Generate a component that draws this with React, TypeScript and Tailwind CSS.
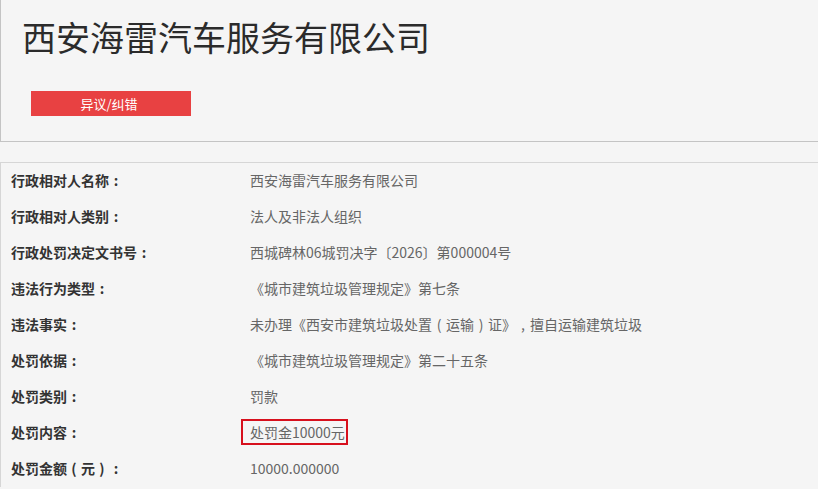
const rows = [
  { label: "行政相对人名称：", value: "西安海雷汽车服务有限公司" },
  { label: "行政相对人类别：", value: "法人及非法人组织" },
  { label: "行政处罚决定文书号：", value: "西城碑林06城罚决字〔2026〕第000004号" },
  { label: "违法行为类型：", value: "《城市建筑垃圾管理规定》第七条" },
  { label: "违法事实：", value: "未办理《西安市建筑垃圾处置（运输）证》，擅自运输建筑垃圾" },
  { label: "处罚依据：", value: "《城市建筑垃圾管理规定》第二十五条" },
  { label: "处罚类别：", value: "罚款" },
  { label: "处罚内容：", value: "处罚金10000元", boxed: true },
  { label: "处罚金额（元）：", value: "10000.000000" },
];

const font = { fontFamily: '"Microsoft YaHei", "Noto Sans CJK SC", "Liberation Sans", sans-serif' };

const Punct = ({ text }: { text: string }) => {
  const parts = text.split(/([（）：，])/);
  return (
    <>
      {parts.map((p, i) => {
        if (p === "（" || p === "）" || p === "：" || p === "，") {
          const ch = p === "（" ? "(" : p === "）" ? ")" : p === "：" ? ":" : ",";
          return (
            <span key={i} className="inline-block w-[1em] text-center">
              {ch}
            </span>
          );
        }
        return <span key={i}>{p}</span>;
      })}
    </>
  );
};

export default function App() {
  return (
    <div className="w-[818px] h-[489px] overflow-hidden bg-[#f5f5f5]" style={font}>
      <div className="h-[142px] border-l border-b border-[#c4c4c4] pl-[21px] pt-[14px]">
        <h1 className="text-[34px] leading-[46px] text-[#2b2b2b] font-normal">
          西安海雷汽车服务有限公司
        </h1>
        <button className="mt-[31px] ml-[9px] w-[160px] h-[25px] bg-[#e84142] text-white text-[13px] leading-[25px] flex justify-center pr-[4px]">
          异议/纠错
        </button>
      </div>
      <div className="mt-[20px] border-l border-t border-[#d6d6d6]">
        {rows.map((r) => (
          <div key={r.label} className="flex h-[36px] items-center text-[14px] pb-[2px]">
            <div className="w-[249px] pl-[10px] font-bold text-[#333]">
              <Punct text={r.label} />
            </div>
            <div className="text-[#666]">
              {r.boxed ? (
                <span className="inline-block -ml-[9px] border-2 border-[#d7101d] pl-[7px] pr-[1px] leading-[22px]">
                  {r.value}
                </span>
              ) : (
                <Punct text={r.value} />
              )}
            </div>
          </div>
        ))}
      </div>
    </div>
  );
}
